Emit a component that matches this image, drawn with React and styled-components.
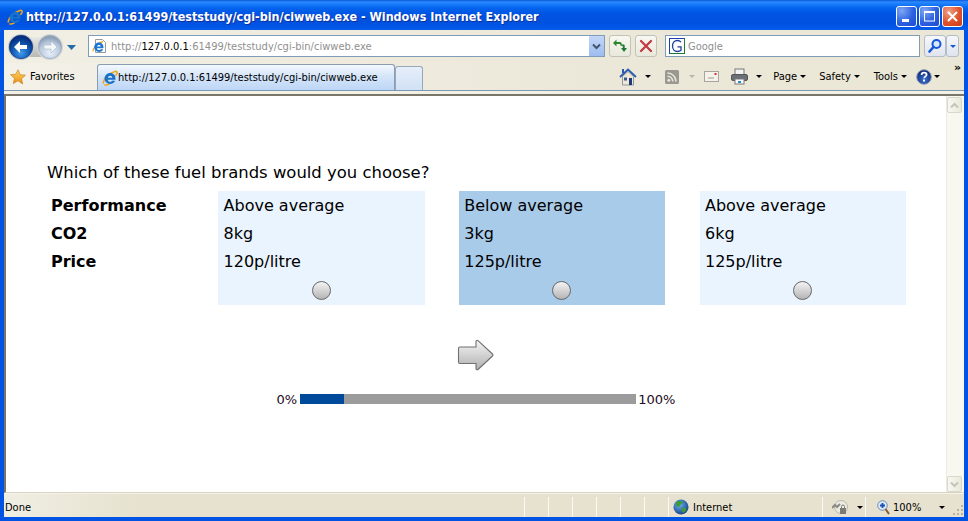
import styled, { createGlobalStyle } from 'styled-components';

const GlobalStyle = createGlobalStyle`
  html, body {
    margin: 0;
    padding: 0;
    overflow: hidden;
  }
`;

const UI_FONT = `"DejaVu Sans Condensed", "DejaVu Sans", sans-serif`;
const PAGE_FONT = `"DejaVu Sans", Verdana, sans-serif`;

const Window = styled.div`
  width: 968px;
  height: 521px;
  display: flex;
  flex-direction: column;
  background: #0053e3;
  font-family: ${UI_FONT};
  overflow: hidden;
`;

const TitleBar = styled.div`
  height: 30px;
  flex: none;
  display: flex;
  align-items: center;
  padding: 3px 5px 0 7px;
  box-sizing: border-box;
  background: linear-gradient(
    #0a57d8 0,
    #2c8bff 2px,
    #1a7cfb 4px,
    #0464ee 8px,
    #0054e3 14px,
    #0051dd 22px,
    #0056e8 27px,
    #0a5ce8 30px
  );
`;

const TitleText = styled.div`
  margin-left: 3px;
  color: #fff;
  font: bold 12.45px ${UI_FONT};
  text-shadow: 1px 1px 0 #0f2f9c;
  white-space: nowrap;
`;

const WindowButtons = styled.div`
  margin-left: auto;
  display: flex;
  gap: 2px;
`;

const WindowButton = styled.div`
  width: 21px;
  height: 21px;
  box-sizing: border-box;
  border: 1px solid #fff;
  border-radius: 3px;
  display: flex;
  align-items: center;
  justify-content: center;
  background: ${(p) =>
    p.$close
      ? 'radial-gradient(circle at 30% 25%, #f0a088, #e0522c 55%, #c83c14)'
      : 'radial-gradient(circle at 25% 20%, #7ea6f4, #2c62e0 55%, #1c4ad0)'};
`;

const Chrome = styled.div`
  flex: 1;
  min-height: 0;
  display: flex;
  flex-direction: column;
  padding: 0 4px 4px;
`;

const NavBar = styled.div`
  height: 33px;
  flex: none;
  display: flex;
  align-items: center;
  box-sizing: border-box;
  padding: 4px 9px 5px 2px;
  background: linear-gradient(90deg, #f1efe4, #ece8d9 60%, #ebe7d6);
`;

const NavOrbs = styled.div`
  width: 76px;
  height: 28px;
  flex: none;
  display: block;
`;

const AddressBox = styled.div`
  margin-left: 6px;
  width: 517px;
  height: 22px;
  flex: none;
  box-sizing: border-box;
  border: 1px solid #7f9db9;
  background: #fff;
  display: flex;
  align-items: center;
  padding-left: 3px;
`;

const AddressText = styled.div`
  margin-left: 3px;
  padding-top: 1px;
  font-size: 11px;
  letter-spacing: 0.02px;
  color: #8f8f8f;
  white-space: nowrap;
  flex: 1;

  b {
    font-weight: normal;
    color: #000;
  }
`;

const ComboButton = styled.div`
  width: 15px;
  height: 20px;
  background: linear-gradient(#c3d6f8, #9dbcf0);
  display: flex;
  align-items: center;
  justify-content: center;
`;

const ToolButton = styled.div`
  margin-left: ${(p) => p.$gap}px;
  width: ${(p) => p.$width || 22}px;
  height: 22px;
  flex: none;
  box-sizing: border-box;
  border: 1px solid #c2c2b8;
  border-radius: 3px;
  background: linear-gradient(#f8f8f2, #e9e8dc);
  display: flex;
  align-items: center;
  justify-content: center;
`;

const SearchBox = styled(AddressBox)`
  margin-left: 8px;
  width: 255px;
  padding-left: 3px;
`;

const SearchHint = styled.div`
  margin-left: 3px;
  padding-top: 1px;
  font-size: 11px;
  color: #8f8f8f;
`;

const SearchSplit = styled(ToolButton)`
  margin-left: ${(p) => p.$gap}px;
  background: linear-gradient(#f6f7fb, #dfe4ee);
  border-color: #b4bcc8;
`;

const TabRow = styled.div`
  height: 28px;
  flex: none;
  display: flex;
  align-items: flex-end;
  box-sizing: border-box;
  border-bottom: 1px solid #7c99b4;
  background: linear-gradient(90deg, #f3f1e8, #ece8d9 60%, #ebe7d6);
`;

const Favorites = styled.div`
  width: 93px;
  height: 27px;
  flex: none;
  display: flex;
  align-items: center;
  box-sizing: border-box;
  padding-left: 6px;
  font-size: 11px;
  color: #000;
  gap: 4px;
`;

const Tab = styled.div`
  width: 298px;
  height: 26px;
  flex: none;
  box-sizing: border-box;
  border: 1px solid #8a9db0;
  border-bottom: none;
  border-radius: 3px 3px 0 0;
  background: linear-gradient(#f4f8fe, #d5e5f9 45%, #bdd6f6);
  display: flex;
  align-items: center;
  padding-left: 4px;
  font-size: 11px;
  white-space: nowrap;
`;

const NewTab = styled.div`
  width: 28px;
  height: 24px;
  flex: none;
  box-sizing: border-box;
  border: 1px solid #98a8b8;
  border-bottom: none;
  border-radius: 3px 3px 0 0;
  background: linear-gradient(#e6eefa, #d2e1f6);
`;

const CommandBar = styled.div`
  margin-left: auto;
  height: 27px;
  display: flex;
  align-items: center;
  font-size: 11px;
  color: #000;
  position: relative;
  padding-right: 24px;
`;

const CommandIcon = styled.div`
  margin-left: ${(p) => p.$gap || 0}px;
  display: flex;
  align-items: center;
`;

const CommandLabel = styled.div`
  margin-left: ${(p) => p.$gap || 0}px;
`;

const Caret = styled.span`
  display: inline-block;
  margin-left: ${(p) => p.$gap || 0}px;
  width: 0;
  height: 0;
  border-left: 3px solid transparent;
  border-right: 3px solid transparent;
  border-top: 3px solid ${(p) => p.$color || '#000'};
`;

const Overflow = styled.div`
  position: absolute;
  right: 3px;
  top: 0;
  font: bold 11px ${PAGE_FONT};
  line-height: 10px;
`;

const Separator = styled.div`
  height: 5px;
  flex: none;
  box-sizing: border-box;
  background: #f3f1e6;
  border-bottom: 2px solid #7a766a;
`;

const PageFrame = styled.div`
  flex: 1;
  min-height: 0;
  display: flex;
  background: #fff;
  border-left: 2px solid #77746a;
  border-bottom: 1px solid #d8d4c4;
`;

const Page = styled.main`
  flex: 1;
  min-width: 0;
  display: flex;
  flex-direction: column;
  font-family: ${PAGE_FONT};
  font-size: 16px;
  color: #000;
`;

const Question = styled.div`
  margin: 66px 0 0 41px;
  height: 20px;
  line-height: 22px;
  font-size: 16.45px;
  white-space: nowrap;
`;

const ChoiceGrid = styled.div`
  margin: 9px 0 0 41px;
  display: grid;
  grid-template-columns: 136.9px repeat(3, 206.4px);
  column-gap: 34.3px;
`;

const Row = styled.div`
  height: 28px;
  line-height: 30px;
  padding-left: ${(p) => p.$indent}px;
  white-space: nowrap;
`;

const Labels = styled.div`
  font-weight: bold;
`;

const Card = styled.div`
  height: 114px;
  background: ${(p) => (p.$selected ? '#a9cbea' : '#e9f4ff')};
`;

const RadioCell = styled.div`
  height: 30px;
  padding-right: 0.6px;
  display: flex;
  align-items: center;
  justify-content: center;
`;

const Radio = styled.div`
  width: 19px;
  height: 19px;
  flex: none;
  box-sizing: border-box;
  border: 1px solid #666;
  border-radius: 50%;
  background: linear-gradient(#f4f4f4, #b4b4b4);
`;

const NextButton = styled.div`
  margin: 34px 2px 0 0;
  align-self: center;
  width: 37px;
  height: 32px;
`;

const ProgressRow = styled.div`
  margin-top: 21px;
  align-self: center;
  display: flex;
  align-items: center;
  height: 14px;
  font-size: 13px;
  color: #220a22;
`;

const ProgressTrack = styled.div`
  margin: 0 2px 0 3px;
  width: 336px;
  height: 10px;
  background: #9c9c9c;
`;

const ProgressFill = styled.div`
  height: 100%;
  background: #004a9c;
`;

const ScrollBar = styled.div`
  width: 18px;
  flex: none;
  box-sizing: border-box;
  border-left: 1px solid #ecebdf;
  background: #f8f7f0;
  display: flex;
  flex-direction: column;
  justify-content: space-between;
  padding-top: 1px;
`;

const ScrollButton = styled.div`
  width: 15px;
  height: 16px;
  box-sizing: border-box;
  border: 1px solid #d8d8cc;
  border-radius: 2px;
  background: linear-gradient(90deg, #f8f8f2, #e8e8da);
  display: flex;
  align-items: center;
  justify-content: center;
`;

const StatusBar = styled.footer`
  height: 24px;
  flex: none;
  display: flex;
  align-items: center;
  box-sizing: border-box;
  padding-top: 3px;
  font-size: 11px;
  color: #000;
  background: linear-gradient(90deg, #f0eee3, #e6e2cf 14%, #e6e2cf);
  border-top: 1px solid #f6f4ea;
`;

const StatusCell = styled.div`
  height: 20px;
  width: ${(p) => p.$width}px;
  flex: ${(p) => (p.$grow ? 1 : 'none')};
  box-sizing: border-box;
  padding-left: ${(p) => p.$pad || 0}px;
  display: flex;
  align-items: center;
  gap: ${(p) => p.$space || 0}px;
  border-left: ${(p) => (p.$first ? 'none' : '1px solid #fbfaf4')};
`;

const Grip = styled.div`
  width: 12px;
  height: 12px;
  align-self: flex-end;
  margin: 0 0 1px auto;
`;

const IeLogo = ({ size = 16 }) => (
  <svg width={size} height={size} viewBox="0 0 16 16">
    <path d="M1 13.5C2 8 7 3.5 13 1.5c1.6-.5 2.6.4 2 2-.3.8-1 1.7-1.6 2.3" fill="none" stroke="#eda51c" strokeWidth="1.6" />
    <path d="M2.4 14.6c1 .8 3.4.1 5.3-1" fill="none" stroke="#eda51c" strokeWidth="1.4" />
    <path d="M8.2 3C5 3 2.6 5.5 2.6 8.6S5 14 8.2 14c2.4 0 4.2-1.2 5-3.2h-3c-.4.7-1.100 1.100-2 1.100-1.300 0-2.300-.9-2.400-2.200h7.600c.1-.4.100-.8.100-1.200C13.500 5.300 11.300 3 8.200 3zM5.900 7.700c.2-1.100 1.100-1.900 2.300-1.900s2 .8 2.200 1.900z" fill="#1a72c8" />
  </svg>
);

const NavButtons = () => (
  <NavOrbs>
    <svg width="76" height="28" viewBox="0 -1 76 28">
      <defs>
        <radialGradient id="backOrb" cx="50%" cy="75%" r="65%">
          <stop offset="0" stopColor="#3f9bec" />
          <stop offset="0.6" stopColor="#0f56ae" />
          <stop offset="1" stopColor="#072f80" />
        </radialGradient>
        <radialGradient id="fwdOrb" cx="50%" cy="75%" r="65%">
          <stop offset="0" stopColor="#e8f0fa" />
          <stop offset="0.7" stopColor="#b8c8dc" />
          <stop offset="1" stopColor="#8ea2b8" />
        </radialGradient>
        <linearGradient id="capsule" x1="0" y1="0" x2="0" y2="1">
          <stop offset="0" stopColor="#e8e8e4" />
          <stop offset="1" stopColor="#b8b8b4" />
        </linearGradient>
      </defs>
      <rect x="14" y="4" width="33" height="20" rx="10" fill="url(#capsule)" />
      <circle cx="15" cy="14" r="13" fill="#c8ccd0" />
      <circle cx="44" cy="14" r="13" fill="#d4d6d8" />
      <circle cx="15" cy="14" r="11.700" fill="url(#backOrb)" stroke="#062c74" strokeWidth="0.6" />
      <circle cx="44" cy="14" r="11.500" fill="url(#fwdOrb)" stroke="#8b9cb0" strokeWidth="0.6" />
      <path d="M8 14l6-6v4h7v4h-7v4z" fill="#fff" />
      <path d="M51 14l-6-6v4h-7v4h7v4z" fill="#f4f6f8" stroke="#9fb0c2" strokeWidth="0.5" />
      <path d="M61 12h9l-4.500 5z" fill="#1f6ca8" />
    </svg>
  </NavOrbs>
);

const IeGlyphPaths = () => (
  <>
    <path d="M1 13.500C2 8 7 3.500 13 1.500" fill="none" stroke="#eda51c" strokeWidth="1.500" />
    <path d="M8.200 3C5 3 2.600 5.500 2.600 8.600S5 14 8.200 14c2.400 0 4.200-1.200 5-3.200h-3c-.4.700-1.100 1.100-2 1.100-1.300 0-2.300-.9-2.400-2.200h7.600c.1-.4.100-.8.100-1.200C13.500 5.300 11.300 3 8.200 3zM5.900 7.700c.2-1.100 1.100-1.900 2.300-1.900s2 .8 2.200 1.900z" fill="#1c78d4" />
  </>
);

const PageGlyph = () => (
  <svg width="16" height="16" viewBox="0 0 16 16">
    <path d="M3.500 1.500h7l3 3v10h-10z" fill="#fff" stroke="#9a9a9a" />
    <g transform="translate(0 2) scale(.85)">
      <IeGlyphPaths />
    </g>
  </svg>
);

const Chevron = ({ color = '#44546c', up }) => (
  <svg width="9" height="7" viewBox="0 0 9 7">
    <path d={up ? 'M1 5.500l3.500-3.500 3.500 3.500' : 'M1 1.500l3.500 3.500 3.500-3.500'} fill="none" stroke={color} strokeWidth="2" />
  </svg>
);

const RefreshIcon = () => (
  <svg width="16" height="16" viewBox="0 0 16 16">
    <path d="M1 5l3.500-3.500V4H8c.8 0 1.300.4 1.500 1L10 7.500 7.500 6H4.500v2.500z" fill="#2a8a2a" />
    <path d="M15 10l-3 4-3-4h1.800V8.500c0-.5-.3-.8-.8-.8L8 7.200V6.500h3.500c.6 0 1.200.5 1.200 1.200V10z" fill="#1c7a30" />
  </svg>
);

const StopIcon = () => (
  <svg width="14" height="14" viewBox="0 0 14 14">
    <path d="M2 2l10 10M12 2L2 12" stroke="#c23a44" strokeWidth="2.300" strokeLinecap="round" />
  </svg>
);

const GoogleBadge = () => (
  <svg width="16" height="16" viewBox="0 0 16 16">
    <rect x="0.500" y="0.500" width="15" height="15" fill="#fff" stroke="#1a7a30" />
    <path d="M.5.500H15.500" stroke="#1a3fb0" />
    <path d="M.5.500V15.500" stroke="#1a3fb0" />
    <path d="M12 4.200C11 3 9.800 2.500 8.400 2.500 5.600 2.500 3.500 4.700 3.500 8s2.100 5.500 4.900 5.500c1.500 0 2.800-.5 3.600-1.200V8.800H8.500" fill="none" stroke="#1c3f9c" strokeWidth="1.300" />
  </svg>
);

const SearchIcon = () => (
  <svg width="16" height="16" viewBox="0 0 16 16">
    <circle cx="9.500" cy="6" r="4" fill="#dbe8fb" stroke="#1657d8" strokeWidth="2" />
    <path d="M6.500 9l-4 4.500" stroke="#1657d8" strokeWidth="2.600" strokeLinecap="round" />
  </svg>
);

const StarIcon = () => (
  <svg width="16" height="16" viewBox="0 0 16 16">
    <defs>
      <linearGradient id="star" x1="0" y1="0" x2="0" y2="1">
        <stop offset="0" stopColor="#ffd860" />
        <stop offset="1" stopColor="#ee8c14" />
      </linearGradient>
    </defs>
    <path d="M8 .8l2.200 4.900 5.300.5-4 3.500 1.200 5.300L8 11.800l-4.700 2.700 1.200-5.300-4-3.500 5.300-.5z" fill="url(#star)" stroke="#c07818" strokeWidth="0.600" />
  </svg>
);

const HomeIcon = () => (
  <svg width="18" height="18" viewBox="0 0 18 18">
    <path d="M1 9L9 1.500 17 9" fill="none" stroke="#2a5ab0" strokeWidth="1.800" />
    <path d="M3.500 8.500L9 3.500l5.500 5V17h-11z" fill="#eee8d4" stroke="#7a8290" strokeWidth="0.800" />
    <rect x="5" y="9.500" width="3" height="3" fill="#3a5a90" />
    <rect x="10" y="10" width="3" height="7" fill="#1c3a78" />
    <rect x="3" y="1" width="2" height="4" fill="#2a5ab0" />
  </svg>
);

const FeedIcon = () => (
  <svg width="14" height="14" viewBox="0 0 14 14">
    <rect width="14" height="14" rx="1.500" fill="#9a9890" />
    <circle cx="3.800" cy="10.200" r="1.500" fill="#e8e6dc" />
    <path d="M2.500 6.200a5.300 5.300 0 0 1 5.300 5.300M2.500 3a8.500 8.500 0 0 1 8.500 8.500" fill="none" stroke="#e8e6dc" strokeWidth="1.600" />
  </svg>
);

const MailIcon = () => (
  <svg width="15" height="11" viewBox="0 0 15 11">
    <rect x="0.500" y="0.500" width="14" height="10" fill="#f4f2ea" stroke="#a8a69c" />
    <path d="M4 7h6" stroke="#9a988e" />
    <rect x="10.500" y="2" width="2" height="2" fill="#d83038" />
  </svg>
);

const PrintIcon = () => (
  <svg width="17" height="17" viewBox="0 0 17 17">
    <rect x="4" y="1" width="9" height="6" fill="#f4f4f4" stroke="#777" />
    <rect x="0.500" y="6.500" width="16" height="6" rx="1.500" fill="#6a7078" stroke="#555" />
    <rect x="4" y="11" width="9" height="5" fill="#fff" stroke="#777" />
    <rect x="7" y="13" width="3" height="2" fill="#2a8ad0" />
  </svg>
);

const HelpIcon = () => (
  <svg width="16" height="16" viewBox="0 0 16 16">
    <defs>
      <radialGradient id="helpOrb" cx="50%" cy="70%" r="60%">
        <stop offset="0" stopColor="#3a70cc" />
        <stop offset="1" stopColor="#142c80" />
      </radialGradient>
    </defs>
    <circle cx="8" cy="8" r="7.300" fill="url(#helpOrb)" stroke="#8a9ab0" strokeWidth="1" />
    <path d="M5.600 6c0-1.500 1-2.300 2.500-2.300s2.500.8 2.500 2c0 1.700-2.400 1.800-2.400 3.600" fill="none" stroke="#fff" strokeWidth="1.700" />
    <rect x="7" y="10.500" width="2" height="2" fill="#fff" />
  </svg>
);

const GlobeIcon = () => (
  <svg width="16" height="16" viewBox="0 0 16 16">
    <defs>
      <radialGradient id="globe" cx="40%" cy="35%" r="70%">
        <stop offset="0" stopColor="#6cb0ea" />
        <stop offset="1" stopColor="#12408c" />
      </radialGradient>
    </defs>
    <circle cx="8" cy="8" r="7.500" fill="url(#globe)" />
    <path d="M5 1.500c2 .5 4 .5 5.500 2-1 1.500-3 1-3.500 3s-2.500 1-3.500.5S3 3 5 1.500zM9 8.500c2 0 4 .5 4.500 1.500-.5 2-2 3.500-3.500 4-1-1.500-2-4-1-5.500z" fill="#3f9a3c" />
  </svg>
);

const SecurityIcon = () => (
  <svg width="17" height="15" viewBox="0 0 17 15">
    <circle cx="9" cy="7" r="6.500" fill="#ecebe2" stroke="#b8b6aa" />
    <path d="M0 8l3-3 2 2 3-3" fill="none" stroke="#8a8a84" strokeWidth="2" />
    <rect x="8" y="8" width="6" height="6" fill="#7c7a74" />
    <path d="M9.500 8V6.500a1.500 1.500 0 0 1 3 0V8" fill="none" stroke="#7c7a74" />
  </svg>
);

const ZoomIcon = () => (
  <svg width="13" height="15" viewBox="0 0 13 15">
    <circle cx="5.500" cy="5.500" r="4.800" fill="#dbe8f8" stroke="#6f8fb4" />
    <path d="M3 5.500h5M5.500 3v5" stroke="#1c50b4" strokeWidth="1.800" />
    <path d="M8.500 9l3.500 5" stroke="#8a5a28" strokeWidth="2" />
  </svg>
);

const NextArrow = () => (
  <NextButton>
    <svg width="37" height="32" viewBox="0 0 37 32">
      <defs>
        <linearGradient id="arrowFill" x1="0" y1="0" x2="0" y2="1">
          <stop offset="0" stopColor="#f4f4f4" />
          <stop offset="1" stopColor="#b0b0b0" />
        </linearGradient>
      </defs>
      <path d="M1.500 9.500a1.500 1.500 0 0 1 1.500-1.500h16V2.500a1.200 1.200 0 0 1 2-.8L35.500 15a1.500 1.500 0 0 1 0 2L21 30.500a1.200 1.200 0 0 1-2-.8V24.500H3a1.500 1.500 0 0 1-1.500-1.500z" fill="url(#arrowFill)" stroke="#707070" strokeWidth="1.100" />
    </svg>
  </NextButton>
);

const options = [
  { performance: 'Above average', co2: '8kg', price: '120p/litre' },
  { performance: 'Below average', co2: '3kg', price: '125p/litre', selected: true },
  { performance: 'Above average', co2: '6kg', price: '125p/litre' },
];

const addressTail = ':61499/teststudy/cgi-bin/ciwweb.exe';
const fullUrl = 'http://127.0.0.1:61499/teststudy/cgi-bin/ciwweb.exe';

export default function App() {
  return (
    <Window>
      <GlobalStyle />
      <TitleBar>
        <IeLogo size={16} />
        <TitleText>{fullUrl} - Windows Internet Explorer</TitleText>
        <WindowButtons>
          <WindowButton>
            <svg width="13" height="13" viewBox="0 0 13 13"><rect x="2" y="9" width="7" height="3" fill="#fff" /></svg>
          </WindowButton>
          <WindowButton>
            <svg width="13" height="13" viewBox="0 0 13 13"><rect x="1.500" y="2" width="10" height="9" fill="none" stroke="#fff" /><rect x="1" y="1" width="11" height="2" fill="#fff" /></svg>
          </WindowButton>
          <WindowButton $close>
            <svg width="13" height="13" viewBox="0 0 13 13"><path d="M2 2l9 9M11 2l-9 9" stroke="#fff" strokeWidth="2" /></svg>
          </WindowButton>
        </WindowButtons>
      </TitleBar>
      <Chrome>
        <NavBar>
          <NavButtons />
          <AddressBox>
            <PageGlyph />
            <AddressText>http://<b>127.0.0.1</b>{addressTail}</AddressText>
            <ComboButton><Chevron /></ComboButton>
          </AddressBox>
          <ToolButton $gap={4}><RefreshIcon /></ToolButton>
          <ToolButton $gap={4}><StopIcon /></ToolButton>
          <SearchBox>
            <GoogleBadge />
            <SearchHint>Google</SearchHint>
          </SearchBox>
          <SearchSplit $gap={4} $width={22}><SearchIcon /></SearchSplit>
          <SearchSplit $gap={0} $width={13}><Caret $color="#1657d8" /></SearchSplit>
        </NavBar>
        <TabRow>
          <Favorites><StarIcon />Favorites</Favorites>
          <Tab><IeLogo size={16} />{fullUrl}</Tab>
          <NewTab />
          <CommandBar>
            <CommandIcon><HomeIcon /></CommandIcon>
            <Caret $gap={8} />
            <CommandIcon $gap={14}><FeedIcon /></CommandIcon>
            <Caret $gap={10} $color="#b8b6aa" />
            <CommandIcon $gap={9}><MailIcon /></CommandIcon>
            <CommandIcon $gap={12}><PrintIcon /></CommandIcon>
            <Caret $gap={8} />
            <CommandLabel $gap={11}>Page</CommandLabel>
            <Caret $gap={3} />
            <CommandLabel $gap={13}>Safety</CommandLabel>
            <Caret $gap={3} />
            <CommandLabel $gap={14}>Tools</CommandLabel>
            <Caret $gap={3} />
            <CommandIcon $gap={9}><HelpIcon /></CommandIcon>
            <Caret $gap={2} />
            <Overflow>»</Overflow>
          </CommandBar>
        </TabRow>
        <Separator />
        <PageFrame>
          <Page>
            <Question>Which of these fuel brands would you choose?</Question>
            <ChoiceGrid>
              <Labels>
                <Row $indent={4}>Performance</Row>
                <Row $indent={4}>CO2</Row>
                <Row $indent={4}>Price</Row>
              </Labels>
              {options.map((o, i) => (
                <Card key={i} $selected={o.selected}>
                  <Row $indent={5.4}>{o.performance}</Row>
                  <Row $indent={5.4}>{o.co2}</Row>
                  <Row $indent={5.4}>{o.price}</Row>
                  <RadioCell><Radio /></RadioCell>
                </Card>
              ))}
            </ChoiceGrid>
            <NextArrow />
            <ProgressRow>
              0%
              <ProgressTrack>
                <ProgressFill style={{ width: `${(44 / 336) * 100}%` }} />
              </ProgressTrack>
              100%
            </ProgressRow>
          </Page>
          <ScrollBar>
            <ScrollButton><Chevron up color="#c4c4b8" /></ScrollButton>
            <ScrollButton><Chevron color="#c4c4b8" /></ScrollButton>
          </ScrollBar>
        </PageFrame>
        <StatusBar>
          <StatusCell $first $width={520} $pad={1}>Done</StatusCell>
          {[0, 1, 2, 3, 4, 5].map((n) => (
            <StatusCell key={n} $width={24} />
          ))}
          <StatusCell $width={154} $pad={4} $space={4}><GlobeIcon />Internet</StatusCell>
          <StatusCell $width={43} $pad={9}><SecurityIcon /><Caret $gap={8} /></StatusCell>
          <StatusCell $grow $pad={11} $space={3}>
            <ZoomIcon />100%
            <Caret $gap={15} />
            <Grip>
              <svg width="12" height="12" viewBox="0 0 12 12"><path d="M9 1h2v2H9zM5 5h2v2H5zM9 5h2v2H9zM1 9h2v2H1zM5 9h2v2H5zM9 9h2v2H9z" fill="#b8b4a0" /></svg>
            </Grip>
          </StatusCell>
        </StatusBar>
      </Chrome>
    </Window>
  );
}
